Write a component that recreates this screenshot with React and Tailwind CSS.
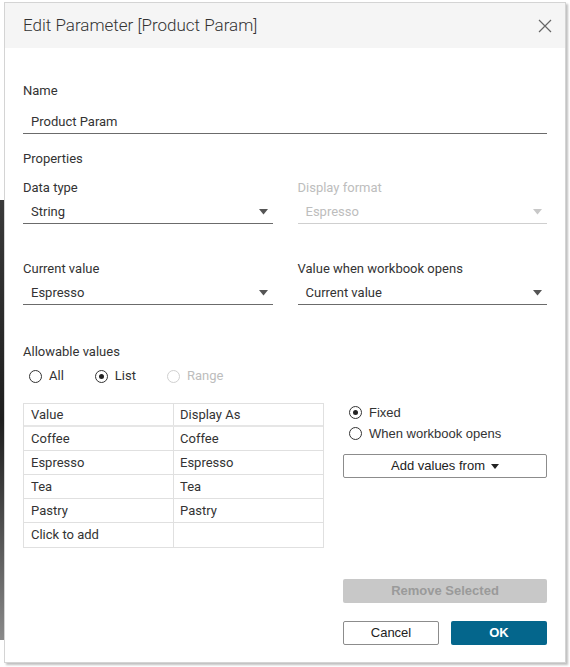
import React from 'react';

const font = { fontFamily: 'Roboto, "Noto Sans", sans-serif' };
const arial = { fontFamily: '"Liberation Sans", Arial, sans-serif' };

function Caret({ disabled }) {
  return (
    <svg width="9" height="6" viewBox="0 0 9 6" className="shrink-0">
      <path d="M0 0 H9 L4.5 5.5 Z" fill={disabled ? '#c8c8c8' : '#555'} />
    </svg>
  );
}

function Select({ value, disabled }) {
  return (
    <div
      className={`flex h-[23px] items-center justify-between border-b pl-2 pr-[5px] text-[13px] ${
        disabled ? 'border-[#cfcfcf] text-[#bdbdbd]' : 'border-[#6b6b6b] text-[#333]'
      }`}
    >
      <span>{value}</span>
      <Caret disabled={disabled} />
    </div>
  );
}

function Radio({ checked, disabled, label, className = '' }) {
  return (
    <label className={`flex items-center gap-[7px] ${className}`}>
      <span
        className={`flex h-[13px] w-[13px] items-center justify-center rounded-full border ${
          disabled ? 'border-[#d0d0d0]' : 'border-[#333]'
        }`}
      >
        {checked && <span className="h-[5px] w-[5px] rounded-full bg-[#222]" />}
      </span>
      <span className={disabled ? 'text-[#bdbdbd]' : 'text-[#333]'}>{label}</span>
    </label>
  );
}

const rows = [
  ['Coffee', 'Coffee'],
  ['Espresso', 'Espresso'],
  ['Tea', 'Tea'],
  ['Pastry', 'Pastry'],
  ['Click to add', ''],
];

export default function App() {
  return (
    <div className="flex h-[667px] w-[570px] bg-white" style={font}>
      {/* bit of the workbook showing behind the dialog */}
      <div className="mt-[200px] h-[440px] w-[4px] bg-gradient-to-b from-[#3a3a3a] via-[#1e1e1e] to-[#8a8a8a]" />

      <div className="mt-[2px] flex h-[661px] w-[562px] flex-col border border-[#d4d4d4] bg-white shadow-[2px_2px_2px_rgba(0,0,0,0.25)]">
        {/* Header */}
        <div className="flex h-[45px] shrink-0 items-center justify-between bg-[#f5f5f5] pl-[18px] pr-[13px]">
          <h1 className="text-[17px] font-light text-[#333]">Edit Parameter [Product Param]</h1>
          <svg width="14" height="14" viewBox="0 0 14 14">
            <path d="M1 1 L13 13 M13 1 L1 13" stroke="#666" strokeWidth="1.2" />
          </svg>
        </div>

        {/* Body */}
        <div className="flex flex-1 flex-col px-[18px] text-[13px] text-[#333]">
          <div className="mt-[35px] leading-4">Name</div>
          <div className="mt-[12px] flex h-[23px] items-center border-b border-[#6b6b6b] pl-2">
            Product Param
          </div>

          <div className="mt-[17px] leading-4">Properties</div>

          <div className="mt-[13px] grid grid-cols-2 gap-x-[25px]">
            <div>
              <div className="leading-4">Data type</div>
              <div className="mt-[5px]">
                <Select value="String" />
              </div>
            </div>
            <div>
              <div className="leading-4 text-[#bdbdbd]">Display format</div>
              <div className="mt-[5px]">
                <Select value="Espresso" disabled />
              </div>
            </div>

            <div className="mt-[37px]">
              <div className="leading-4">Current value</div>
              <div className="mt-[5px]">
                <Select value="Espresso" />
              </div>
            </div>
            <div className="mt-[37px]">
              <div className="leading-4">Value when workbook opens</div>
              <div className="mt-[5px]">
                <Select value="Current value" />
              </div>
            </div>
          </div>

          <div className="mt-[39px] leading-4">Allowable values</div>
          <div className="mt-[8px] flex h-4 items-center pl-[6px]">
            <Radio label="All" />
            <Radio label="List" checked className="ml-[31px]" />
            <Radio label="Range" disabled className="ml-[31px]" />
          </div>

          <div className="mt-[19px] flex">
            <div className="w-[301px] border border-[#e0e0e0]">
              <div className="grid h-[23px] grid-cols-[150px_1fr] border-b-2 border-[#e6e6e6]">
                <div className="flex items-center border-r border-[#e0e0e0] pl-[7px]">Value</div>
                <div className="flex items-center pl-[6px]">Display As</div>
              </div>
              {rows.map((r, i) => (
                <div
                  key={i}
                  className={`grid h-[24px] grid-cols-[150px_1fr] ${
                    i < rows.length - 1 ? 'border-b border-[#e0e0e0]' : ''
                  }`}
                >
                  <div className="flex items-center border-r border-[#e0e0e0] pl-[7px]">{r[0]}</div>
                  <div className="flex items-center pl-[6px]">{r[1]}</div>
                </div>
              ))}
            </div>

            <div className="ml-[19px] flex flex-1 flex-col pt-[1px]" style={arial}>
              <Radio label="Fixed" checked className="ml-[6px] h-[17px]" />
              <Radio label="When workbook opens" className="ml-[6px] mt-[4px] h-[17px]" />
              <button className="mt-[12px] flex h-[24px] w-full items-center justify-center gap-[6px] rounded-[2px] border border-[#8c8c8c] bg-white text-[13px] text-[#222]">
                Add values from
                <svg width="8" height="5" viewBox="0 0 8 5">
                  <path d="M0 0 H8 L4 5 Z" fill="#222" />
                </svg>
              </button>
            </div>
          </div>

          {/* Footer */}
          <div className="mt-auto mb-[17px] flex flex-col items-end" style={arial}>
            <button className="flex h-[24px] w-[204px] items-center justify-center rounded-[2px] bg-[#c8c8c8] text-[13px] font-bold text-[#9a9a9a]">
              Remove Selected
            </button>
            <div className="mt-[18px] flex gap-[12px]">
              <button className="h-[24px] w-[96px] rounded-[2px] border border-[#8c8c8c] bg-white text-[13px] text-[#222]">
                Cancel
              </button>
              <button className="h-[24px] w-[96px] rounded-[2px] bg-[#04668c] text-[13px] font-bold text-white">
                OK
              </button>
            </div>
          </div>
        </div>
      </div>
    </div>
  );
}
